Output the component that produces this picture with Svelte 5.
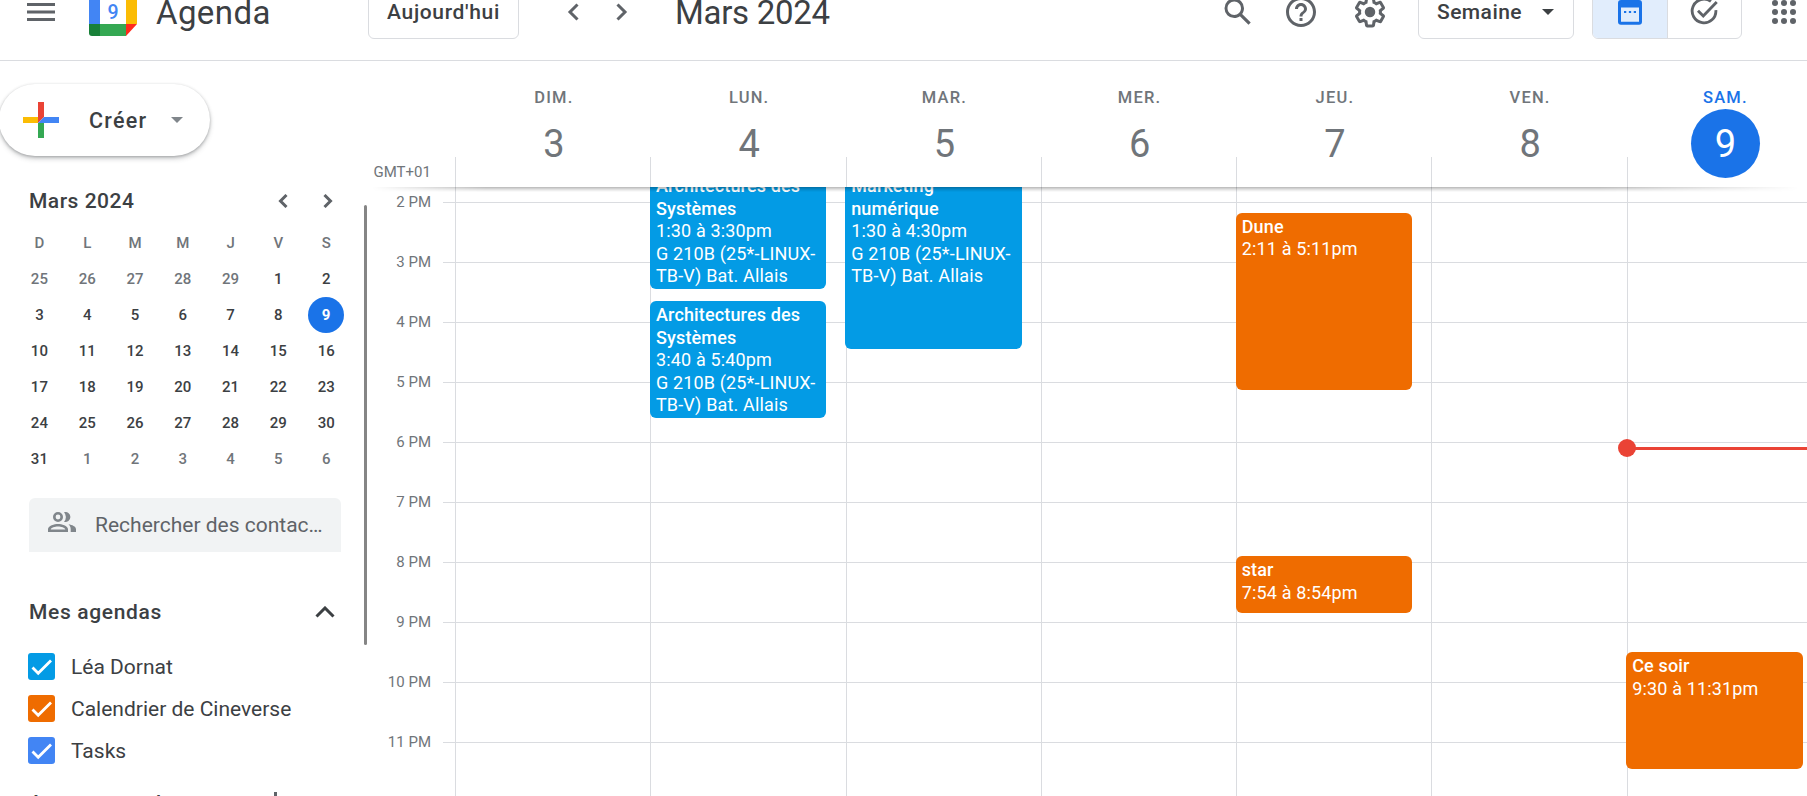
<script>
  const days = [
    { name: 'DIM.', num: 3 },
    { name: 'LUN.', num: 4 },
    { name: 'MAR.', num: 5 },
    { name: 'MER.', num: 6 },
    { name: 'JEU.', num: 7 },
    { name: 'VEN.', num: 8 },
    { name: 'SAM.', num: 9, today: true }
  ];
  const hours = ['2 PM', '3 PM', '4 PM', '5 PM', '6 PM', '7 PM', '8 PM', '9 PM', '10 PM', '11 PM'];
  const room = 'G 210B (25*-LINUX-TB-V) Bat. Allais';
  const events = [
    { day: 1, top: -15, height: 117, color: '#039be5', title: 'Architectures des Systèmes', time: '1:30 à 3:30pm', room },
    { day: 1, top: 114, height: 117, color: '#039be5', title: 'Architectures des Systèmes', time: '3:40 à 5:40pm', room },
    { day: 2, top: -15, height: 177, color: '#039be5', title: 'Marketing numérique', time: '1:30 à 4:30pm', room },
    { day: 4, top: 25.8, height: 177, color: '#ef6c00', title: 'Dune', time: '2:11 à 5:11pm' },
    { day: 4, top: 369, height: 57, color: '#ef6c00', title: 'star', time: '7:54 à 8:54pm' },
    { day: 6, top: 465, height: 117, color: '#ef6c00', title: 'Ce soir', time: '9:30 à 11:31pm' }
  ];
  const initials = ['D', 'L', 'M', 'M', 'J', 'V', 'S'];
  const cells = Array.from({ length: 42 }, (_, i) => {
    if (i < 5) return { n: 25 + i, out: true };
    if (i < 36) return { n: i - 4, out: false };
    return { n: i - 35, out: true };
  });
  const agendas = [
    { name: 'Léa Dornat', color: '#039be5' },
    { name: 'Calendrier de Cineverse', color: '#ef6c00' },
    { name: 'Tasks', color: '#4285f4' }
  ];
</script>

<div class="page">
  <header>
    <svg class="burger" width="28" height="18" viewBox="0 0 28 18" fill="#5f6368"><path d="M0 0h28v3H0zM0 7.5h28v3H0zM0 15h28v3H0z" /></svg>
    <div class="logo">
      <svg width="48" height="48" viewBox="0 0 48 48">
        <path d="M11 0h26v36H11z" fill="#fff" />
        <path d="M4 0h33v12H0V4a4 4 0 0 1 4-4z" fill="#4285f4" />
        <path d="M0 12h11v24H0z" fill="#4285f4" />
        <path d="M37 12h11v24H37z" fill="#fbbc04" />
        <path d="M0 36h11v12H3a3 3 0 0 1-3-3z" fill="#188038" />
        <path d="M11 36h26v12H11z" fill="#34a853" />
        <path d="M37 36h11L37 48z" fill="#ff2a1c" />
      </svg>
      <span>9</span>
    </div>
    <div class="brand">Agenda</div>
    <button class="btn today-btn">Aujourd'hui</button>
    <div class="arrows">
      <svg width="12" height="18" viewBox="0 0 12 18"><path d="M10.5 1.5L3 9l7.500 7.500" /></svg>
      <svg width="12" height="18" viewBox="0 0 12 18"><path d="M1.500 1.500L9 9l-7.500 7.500" /></svg>
    </div>
    <div class="month">Mars 2024</div>
    <div class="tools">
      <svg width="36" height="36" viewBox="0 0 24 24" fill="#5f6368"><path d="M20.490 19l-5.730-5.730C15.530 12.200 16 10.910 16 9.500A6.500 6.500 0 1 0 9.500 16c1.410 0 2.700-.47 3.770-1.240L19 20.490 20.490 19zM5 9.500C5 7.010 7.010 5 9.500 5S14 7.010 14 9.500 11.990 14 9.500 14 5 11.990 5 9.500z" /></svg>
      <svg width="36" height="36" viewBox="0 0 24 24" fill="#5f6368"><path d="M11 18h2v-2h-2v2zm1-16C6.480 2 2 6.480 2 12s4.480 10 10 10 10-4.480 10-10S17.520 2 12 2zm0 18c-4.410 0-8-3.590-8-8s3.590-8 8-8 8 3.590 8 8-3.590 8-8 8zm0-14c-2.210 0-4 1.790-4 4h2c0-1.100.9-2 2-2s2 .9 2 2c0 2-3 1.750-3 5h2c0-2.250 3-2.500 3-5 0-2.210-1.790-4-4-4z" /></svg>
      <svg width="36" height="36" viewBox="0 0 24 24" fill="#5f6368"><path d="M13.850 22.250h-3.700c-.74 0-1.360-.54-1.450-1.270l-.27-1.890c-.27-.14-.53-.29-.79-.46l-1.800.72c-.7.26-1.470-.03-1.810-.65L2.200 15.530c-.35-.66-.2-1.440.36-1.880l1.530-1.190c-.01-.15-.02-.3-.02-.46 0-.15.010-.31.020-.46l-1.520-1.190c-.59-.45-.74-1.260-.37-1.880l1.850-3.190c.34-.62 1.110-.9 1.790-.63l1.810.73c.26-.17.52-.32.78-.46l.27-1.910c.09-.7.710-1.250 1.440-1.250h3.700c.74 0 1.360.54 1.450 1.270l.27 1.890c.27.14.53.29.79.46l1.800-.72c.71-.26 1.480.03 1.820.65l1.840 3.180c.36.66.2 1.440-.36 1.880l-1.520 1.190c.010.15.020.3.020.46s-.010.31-.020.46l1.520 1.190c.56.45.72 1.230.37 1.860l-1.860 3.220c-.34.62-1.110.9-1.800.63l-1.800-.72c-.26.17-.52.32-.78.46l-.27 1.910c-.1.68-.72 1.220-1.460 1.220zm-3.230-2h2.760l.37-2.550.53-.22c.44-.18.88-.44 1.340-.78l.45-.34 2.380.96 1.380-2.400-2.030-1.580.07-.56c.03-.26.06-.51.06-.78s-.03-.53-.06-.78l-.07-.56 2.030-1.580-1.390-2.400-2.390.96-.45-.35c-.42-.32-.87-.58-1.330-.77l-.52-.22-.37-2.550h-2.760l-.37 2.550-.53.21c-.44.19-.88.44-1.340.79l-.45.33-2.380-.95-1.390 2.390 2.030 1.580-.07.56a7 7 0 0 0-.06.79c0 .26.020.53.060.78l.07.56-2.030 1.580 1.380 2.400 2.390-.96.45.35c.43.33.86.58 1.330.77l.53.22.38 2.550z" /><circle cx="12" cy="12" r="3.500" /></svg>
    </div>
    <button class="btn view-btn">Semaine<i class="tri"></i></button>
    <div class="toggle">
      <div class="on"><svg width="36" height="36" viewBox="0 0 24 24" fill="#1a73e8"><path d="M18 4h-1V2h-2v2H9V2H7v2H6a2 2 0 0 0-2 2v12.500a2 2 0 0 0 2 2h12a2 2 0 0 0 2-2V6a2 2 0 0 0-2-2zm0 14.500H6V9h12v9.500zM8 11.300h1.500v1.400H8zM11.250 11.300h1.500v1.400h-1.500zM14.500 11.300H16v1.400h-1.500z" /></svg></div>
      <div><svg width="36" height="36" viewBox="0 0 24 24" fill="none" stroke="#5f6368" stroke-width="1.900"><path d="M16.600 4.900A7.900 7.900 0 1 0 19.900 10.800" /><path d="M8 11.200l3.500 3.500 9-9.400" /></svg></div>
    </div>
    <svg class="apps" width="36" height="36" viewBox="0 0 24 24" fill="#5f6368">
      {#each [6, 12, 18] as cy}{#each [6, 12, 18] as cx}<circle {cx} {cy} r="2" />{/each}{/each}
    </svg>
  </header>

  <main>
    <aside>
      <button class="create">
        <svg width="36" height="36" viewBox="0 0 36 36"><path d="M15 0h6v15l-6 6z" fill="#ea4335" /><path d="M0 15h15v6H0z" fill="#fbbc04" /><path d="M15 21h6v15h-6z" fill="#34a853" /><path d="M21 15h15v6H15z" fill="#4285f4" /></svg>
        <span>Créer</span><i class="tri"></i>
      </button>
      <div class="mini-head">
        <span>Mars 2024</span>
        <svg width="10" height="14" viewBox="0 0 10 14"><path d="M8.500 1L2.500 7l6 6" /></svg>
        <svg width="10" height="14" viewBox="0 0 10 14"><path d="M1.500 1l6 6-6 6" /></svg>
      </div>
      <div class="mini">
        {#each initials as d}<span class="out">{d}</span>{/each}
        {#each cells as c}<span class:out={c.out} class:now={!c.out && c.n === 9}>{c.n}</span>{/each}
      </div>
      <div class="search">
        <svg width="28" height="20" viewBox="0 0 28 20" fill="#80868b"><path fill-rule="evenodd" d="M10 0a5 5 0 1 1 0 10 5 5 0 0 1 0-10zm0 2.600a2.400 2.400 0 1 0 0 4.800 2.400 2.400 0 0 0 0-4.800zM10 12c3.500 0 10 1.700 10 5.200V20H0v-2.800C0 13.700 6.500 12 10 12zm0 2.600c-3 0-7 1.300-7.300 2.800h14.600c-.3-1.500-4.300-2.800-7.300-2.800z" /><path d="M16 .2A5 5 0 1 1 16 9.800 7 7 0 0 0 16 .2zM20.500 12.300c3.600.6 7.500 2.200 7.500 4.900V20h-5.300v-2.800c0-2-.8-3.600-2.200-4.900z" /></svg>
        <span>Rechercher des contac…</span>
      </div>
      <div class="section">
        <span>Mes agendas</span>
        <svg width="20" height="12" viewBox="0 0 20 12"><path d="M1.500 10.500L10 2l8.500 8.500" /></svg>
      </div>
      {#each agendas as a}
        <div class="agenda">
          <i style:background={a.color}><svg width="27" height="27" viewBox="0 0 27 27"><path d="M4.500 14.500l5.700 5.700L23 7.500" /></svg></i>
          <span>{a.name}</span>
        </div>
      {/each}
      <div class="section others">
        <span>Autres agendas</span>
        <svg width="21" height="21" viewBox="0 0 21 21"><path d="M10.500 0v21M0 10.500h21" /></svg>
      </div>
      <div class="scroll"></div>
    </aside>

    <section>
      <div class="week-head">
        <div class="gmt">GMT+01</div>
        {#each days as d}
          <div class="day" class:current={d.today}>
            <span class="dn">{d.name}</span>
            <span class="num">{d.num}</span>
          </div>
        {/each}
      </div>
      <div class="grid">
        <div class="shade"></div>
        <div class="labels">
          {#each hours as h}<span>{h}</span>{/each}
        </div>
        <div class="ticks">{#each hours as _}<i></i>{/each}</div>
        {#each days as d, i}
          <div class="col">
            {#each hours as _}<i></i>{/each}
            {#each events.filter((e) => e.day === i) as e}
              <div class="event" style:top="{e.top}px" style:height="{e.height}px" style:background={e.color}>
                <b>{e.title}</b>
                <span>{e.time}</span>
                {#if e.room}<span>{e.room}</span>{/if}
              </div>
            {/each}
            {#if d.today}<div class="nowline"></div>{/if}
          </div>
        {/each}
      </div>
    </section>
  </main>
</div>

<style>
  :global(body) { margin: 0; background: #fff; }
  .page { width: 1807px; height: 796px; overflow: hidden; font-family: Roboto, "Liberation Sans", sans-serif; color: #3c4043; position: relative; }
  svg { display: block; flex: none; }
  button { font: inherit; color: inherit; background: #fff; padding: 0; }
  header { box-sizing: border-box; height: 81px; margin-top: -20px; padding: 0 0 16px 27px; border-bottom: 1px solid #dadce0; display: flex; align-items: center; }
  header > * { flex: none; }
  .logo { margin-left: 34px; position: relative; }
  .logo span { position: absolute; inset: 12px 0 12px; text-align: center; line-height: 25px; font-size: 19.500px; font-weight: 500; color: #4285f4; }
  .brand { margin-left: 19px; width: 212px; font-size: 33px; letter-spacing: .4px; }
  .btn { box-sizing: border-box; height: 54px; border: 1px solid #dadce0; border-radius: 6px; font-size: 21px; font-weight: 500; }
  .today-btn { width: 151px; letter-spacing: .650px; }
  .arrows { display: flex; gap: 37px; margin-left: 48px; }
  .arrows path, .mini-head path { fill: none; stroke: #5f6368; stroke-width: 3; }
  .month { margin-left: 47px; width: 545px; font-size: 33px; letter-spacing: -.3px; }
  .tools { display: flex; width: 198px; }
  .tools svg + svg { margin-left: 27px; }
  .tools svg + svg + svg { margin-left: 33px; }
  .view-btn { display: flex; align-items: center; width: 156px; padding-left: 18px; gap: 20px; letter-spacing: .45px; }
  .tri { border: 6px solid transparent; border-top-color: #3c4043; border-bottom: 0; }
  .toggle { display: flex; box-sizing: border-box; width: 150px; height: 54px; margin-left: 18px; border: 1px solid #dadce0; border-radius: 6px; overflow: hidden; }
  .toggle div { flex: 1; display: flex; align-items: center; justify-content: center; }
  .toggle .on { background: #e1edfc; border-right: 1px solid #dadce0; }
  .apps { margin-left: 24px; }
  main { display: flex; height: 735px; }
  aside { width: 367px; flex: none; position: relative; overflow: hidden; }
  .create { display: flex; align-items: center; box-sizing: border-box; width: 211px; height: 72px; margin: 23px 0 0 -1px; padding-left: 24px; border: 0; border-radius: 36px; box-shadow: 0 1px 3px rgba(60,64,67,.35), 0 3px 5px rgba(60,64,67,.22); font-size: 21.500px; font-weight: 500; letter-spacing: 1.250px; }
  .create span { width: 81.500px; margin-left: 30px; text-align: left; }
  .create .tri { border-width: 6.500px 6.500px 0; border-top-color: #80868b; }
  .mini-head { display: flex; align-items: center; height: 36px; margin-top: 27px; padding-left: 29px; font-size: 21px; font-weight: 500; }
  .mini-head span { width: 249px; letter-spacing: .5px; }
  .mini-head svg + svg { margin-left: 35px; }
  .mini { display: grid; grid-template-columns: repeat(7, 36px); column-gap: 11.800px; grid-auto-rows: 36px; margin: 6px 0 0 21.400px; font-size: 15px; font-weight: 500; text-align: center; line-height: 36px; }
  .mini .out { color: #70757a; }
  .mini .now { background: #1a73e8; color: #fff; border-radius: 50%; font-weight: 700; }
  .search { display: flex; align-items: center; box-sizing: border-box; width: 312px; height: 54px; margin: 21px 0 0 29px; padding-left: 19px; background: #f1f3f4; border-radius: 6px 6px 0 0; font-size: 21px; color: #5f6368; }
  .search svg { margin-top: -6px; }
  .search span { margin-left: 19px; white-space: nowrap; }
  .section { display: flex; align-items: center; height: 40px; margin: 40px 0 21px; padding-left: 29px; font-size: 21px; font-weight: 500; }
  .section span { width: 286px; letter-spacing: .650px; }
  .section path { fill: none; stroke: #3c4043; stroke-width: 3; }
  .agenda { display: flex; align-items: center; height: 27px; margin: 0 0 15px 28px; font-size: 21px; }
  .agenda i { width: 27px; height: 27px; border-radius: 3px; }
  .agenda path { fill: none; stroke: #fff; stroke-width: 2.800; }
  .agenda span { margin-left: 16px; white-space: nowrap; }
  .others { margin: 19px 0 0; }
  .others span { width: 236px; }
  .others svg { margin-top: -2px; }
  .others path { stroke: #5f6368; }
  .scroll { position: absolute; left: 364px; top: 144px; width: 3px; height: 440px; border-radius: 2px; background: #858585; }
  section { flex: none; width: 1455px; }
  .week-head { display: flex; height: 126px; }
  .gmt { width: 88px; flex: none; box-sizing: border-box; padding: 102px 0 0 6.500px; font-size: 15px; color: #70757a; }
  .day { width: 195.250px; flex: none; box-sizing: border-box; padding-left: 2.500px; height: 126px; display: flex; flex-direction: column; align-items: center; color: #70757a; background: linear-gradient(#dadce0, #dadce0) 0 100% / 1px 30px no-repeat; }
  .dn { margin-top: 27px; line-height: 20px; font-size: 16.500px; font-weight: 500; letter-spacing: 1.200px; }
  .num { width: 69px; height: 69px; margin-top: 1px; border-radius: 50%; text-align: center; line-height: 71px; font-size: 38px; }
  .current { color: #1a73e8; }
  .current .num { color: #fff; background: #1a73e8; }
  .grid { display: flex; height: 609px; position: relative; overflow: hidden; }
  .shade { position: absolute; z-index: 3; left: 5px; width: 1427px; top: 0; height: 5px; background: linear-gradient(rgba(0,0,0,.28), rgba(0,0,0,.1) 55%, transparent); mask-image: linear-gradient(90deg, transparent, #000 8%, #000 86%, transparent); }
  .labels { width: 64px; padding-top: 5px; flex: none; }
  .labels span { display: block; height: 60px; line-height: 20px; font-size: 15px; color: #70757a; text-align: right; }
  .ticks { width: 24px; box-sizing: border-box; padding: 15px 0 0 12px; flex: none; }
  .ticks i, .col > i { display: block; box-sizing: border-box; height: 60px; border-top: 1px solid #dadce0; }
  .col { width: 195.250px; flex: none; box-sizing: border-box; padding-top: 15px; border-left: 1px solid #dadce0; position: relative; }
  .event { position: absolute; left: -1.300px; width: 176.400px; box-sizing: border-box; border-radius: 6px; padding: 3px 0 0 6px; color: #fff; font-size: 18px; letter-spacing: .150px; line-height: 22.500px; overflow: hidden; }
  .event b { display: block; font-weight: 500; padding-right: 20px; }
  .event span { display: block; }
  .nowline { position: absolute; left: -1px; right: 0; top: 260px; height: 3px; background: #ea4335; }
  .nowline::before { content: ""; position: absolute; left: -9px; top: -8px; width: 18px; height: 18px; border-radius: 50%; background: #ea4335; }
</style>
